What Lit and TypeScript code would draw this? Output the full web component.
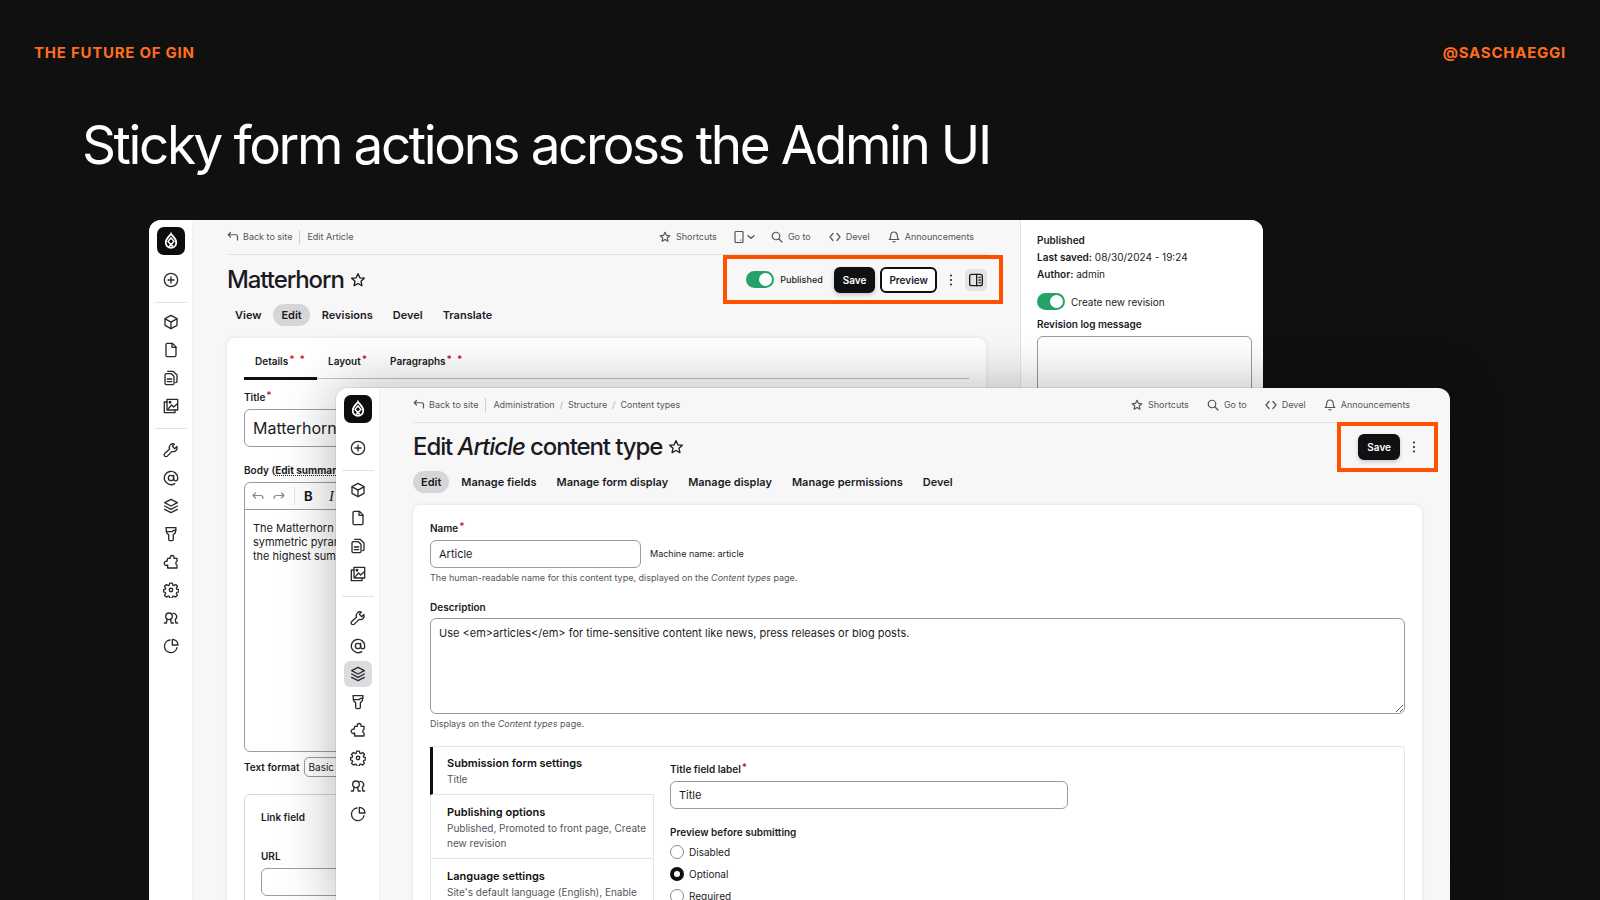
import { LitElement, html, css, svg, nothing } from "lit";
import { customElement, property } from "lit/decorators.js";
import { classMap } from "lit/directives/class-map.js";

const glyphs: Record<string, unknown> = {
  plus: svg`<circle cx="12" cy="12" r="10"/><path d="M12 7.500v9M7.500 12h9"/>`,
  cube: svg`<path d="M12 2 21 7v10l-9 5-9-5V7z"/><path d="m3.300 7.200 8.700 4.900 8.700-4.900M12 12v9.800"/>`,
  file: svg`<path d="M14 2H6.500a2 2 0 0 0-2 2v16a2 2 0 0 0 2 2h11a2 2 0 0 0 2-2V7.500z"/><path d="M13.500 2v6h6"/>`,
  files: svg`<path d="M12.500 5.500H5a2 2 0 0 0-2 2V20a2 2 0 0 0 2 2h9.500a2 2 0 0 0 2-2V9.500z"/><path d="M7 2h8l6 5.500V17a2 2 0 0 1-2 2M6.500 13.500h6.500M6.500 17.500h6.500"/>`,
  media: svg`<path d="M6 2h16v16H6z"/><path d="M6 6H2v16h16v-4M7 17l6-6.500 3 3 5.500-5"/><circle cx="10.500" cy="6.500" r="1.200"/>`,
  wrench: svg`<path d="M20.800 6.800 17.500 10 14 6.500 17.200 3.200a5.600 5.600 0 0 0-7.400 7.200L2.600 17.400a2.500 2.500 0 0 0 0 3.800 2.700 2.700 0 0 0 3.900 0l7.100-7.100a5.600 5.600 0 0 0 7.200-7.300z"/>`,
  at: svg`<circle cx="12" cy="12" r="4"/><path d="M16 8v5.200a3 3 0 0 0 6 0V12a10 10 0 1 0-4.500 8.400"/>`,
  layers: svg`<path d="m12 2 9.500 5-9.500 5-9.500-5z"/><path d="m2.500 12 9.500 5 9.500-5M2.500 17l9.500 5 9.500-5"/>`,
  brush: svg`<path d="M4.500 2.500h15l-1 7.500L15.500 13v7a2 2 0 0 1-2 2h-3a2 2 0 0 1-2-2v-7l-3-3z"/><path d="M5 8.500h9l1.500-2h4"/>`,
  puzzle: svg`<path d="M7 6.500h4a3 3 0 1 1 5.500 0H21V11a3 3 0 0 0 0 5.500V21H7v-4.500a3.200 3.200 0 1 1-1-5.500z"/>`,
  gear: svg`<circle cx="12" cy="12" r="2.600"/><path d="M10 1.800h4l.7 3 1.600.7 2.700-1.700 2.700 2.700-1.700 2.800.7 1.600 3 .7v3.200l-3 .8-.7 1.600 1.700 2.700-2.800 2.800-2.700-1.700-1.600.7-.7 2.600h-3.800l-.7-2.600-1.600-.7-2.700 1.700-2.800-2.800 1.700-2.700-.7-1.600-2.600-.8v-3.200l2.600-.7.700-1.600-1.700-2.800 2.700-2.700 2.800 1.700 1.600-.7z"/>`,
  people: svg`<circle cx="9" cy="9.500" r="5"/><path d="M2 19.500h3l1.200-5.600M15.500 19.500h-3l-1.200-5.600M15 5a5 5 0 0 1 3.500 9l.8 5.500H22"/>`,
  pie: svg`<path d="M10.500 3a9.500 9.500 0 1 0 10.500 11.500"/><path d="M14 2v8.500h8.500A9 9 0 0 0 14 2z"/>`,
  star: svg`<path d="m12 2.500 2.800 6.200 6.700.7-5 4.500 1.400 6.700-5.900-3.400-5.900 3.400 1.400-6.700-5-4.500 6.700-.7z"/>`,
  phone: svg`<rect x="4" y="1" width="16" height="22" rx="2"/><path d="M15 18h1"/>`,
  chevron: svg`<path d="m3 8 9 8 9-8"/>`,
  search: svg`<circle cx="10" cy="10" r="7.500"/><path d="m15.500 15.500 6.500 6.500"/>`,
  code: svg`<path d="M8 5 2 12l6 7M16 5l6 7-6 7"/>`,
  bell: svg`<path d="M12 2a6.500 6.500 0 0 0-6.500 6.500c0 6-3 8.500-3 8.500h19s-3-2.500-3-8.500A6.500 6.500 0 0 0 12 2zM9.500 21.500h5"/>`,
  back: svg`<path d="M7 3 2.500 7.500 7 12M2.500 7.500H18a3 3 0 0 1 3 3V18"/>`,
  undo: svg`<path d="M7 6 2 11l5 5M2 11h15a5 5 0 0 1 5 5v1"/>`,
  redo: svg`<path d="m17 6 5 5-5 5M22 11H7a5 5 0 0 0-5 5v1"/>`,
  panel: svg`<rect x="2.500" y="3.500" width="19" height="17" rx="3"/><path d="M13 3.500v17M16.500 8h2M16.500 12h2M16.500 16h2"/>`,
};

const icon = (name: string, size = "") =>
  html`<svg class="icon ${size}" viewBox="0 0 24 24" aria-hidden="true">${glyphs[name]}</svg>`;

const dots = html`<svg class="icon dots" viewBox="0 0 24 24" aria-hidden="true">
  <circle cx="12" cy="3" r="2" /><circle cx="12" cy="12" r="2" /><circle cx="12" cy="21" r="2" />
</svg>`;

const shared = css`
  :host {
    --ink: #1b1b1f;
    --muted: #55565b;
    --line: #e4e4e6;
    --field: #9b9ba0;
    --accent: #ff5000;
    --green: #26a269;
    font-family: Inter, "Liberation Sans", sans-serif;
    font-size: 10px;
    line-height: 16px;
    color: var(--ink);
  }
  * { box-sizing: border-box; }
  a { color: inherit; text-decoration: none; }
  button, input, textarea, select { font: inherit; color: inherit; margin: 0; }
  .icon {
    display: block;
    width: 16px;
    height: 16px;
    flex: none;
    fill: none;
    stroke: currentColor;
    stroke-width: 2;
    stroke-linejoin: round;
    stroke-linecap: round;
  }
  .icon.small { width: 12px; height: 12px; stroke-width: 2.400; }
  .icon.tiny { width: 8px; height: 8px; stroke-width: 4; }
  .icon.dots { width: 12px; height: 12px; fill: currentColor; stroke: none; }
  .frame {
    display: flex;
    height: 100%;
    overflow: hidden;
    border-radius: 12px;
    background: #f7f7f8;
  }
  .main { flex: 1; min-width: 0; padding: 0 34px; }
  .topbar {
    display: flex;
    justify-content: space-between;
    height: 35px;
    padding-right: 12px;
    border-bottom: 1px solid var(--line);
    font-size: 9px;
    color: var(--muted);
  }
  .crumbs, .tools, .tools a, .tools button, .crumbs a { display: flex; align-items: center; }
  .crumbs a { gap: 4px; }
  .sep { width: 1px; height: 14px; margin: 0 7px; background: #cfcfd2; }
  .slash { margin: 0 5px; color: #b0b0b4; }
  .tools { gap: 18px; }
  .tools a, .tools button { gap: 5px; padding: 0; border: 0; background: none; }
  .tools button { gap: 2px; margin: 0 -2px; }
  .heading { display: flex; align-items: center; justify-content: space-between; height: 49px; }
  .title { display: flex; align-items: center; gap: 6px; }
  h2 { margin: 0; font-size: 24px; line-height: 32px; font-weight: 500; letter-spacing: -0.045em; }
  .tabs { display: flex; gap: 4px; font-size: 11px; font-weight: 600; line-height: 22px; }
  .tabs a { padding: 0 8px; border-radius: 11px; }
  .tabs .current { background: #d6d6d8; }
  .card {
    min-height: 100vh;
    margin-top: 12px;
    padding: 0 17px;
    border-radius: 8px 8px 0 0;
    background: #fff;
    box-shadow: 0 0 4px rgba(0, 0, 0, 0.1);
  }
  .actions { position: relative; display: flex; align-items: center; gap: 5px; }
  .actions::after {
    content: "";
    position: absolute;
    border: 4px solid var(--accent);
    pointer-events: none;
  }
  .btn {
    height: 26px;
    padding: 0 7px;
    border: 2px solid #101012;
    border-radius: 6px;
    background: #fff;
    font-weight: 600;
    line-height: 20px;
  }
  .btn.primary { background: #101012; color: #fff; box-shadow: 0 2px 4px rgba(0, 0, 0, 0.2); }
  .ghost { display: flex; align-items: center; justify-content: center; width: 18px; height: 22px; padding: 0; border: 0; border-radius: 5px; background: none; }
  .switch { display: flex; align-items: center; gap: 6px; }
  .switch input {
    appearance: none;
    width: 28px;
    height: 17px;
    padding: 2px;
    border-radius: 9px;
    background: var(--green);
  }
  .switch input::before {
    content: "";
    display: block;
    width: 13px;
    height: 13px;
    margin-left: 11px;
    border-radius: 50%;
    background: #fff;
  }
  .label { display: block; font-weight: 600; }
  .req { margin-left: 1px; color: #d2122e; font-weight: 600; line-height: 0; vertical-align: 2px; }
  .field {
    display: block;
    width: 100%;
    height: 28px;
    padding: 0 8px;
    border: 1px solid var(--field);
    border-radius: 6px;
    background: #fff;
    font-size: 11px;
    outline: none;
  }
  textarea.field { padding: 6px 8px; line-height: 16px; }
`;

@customElement("admin-rail")
export class AdminRail extends LitElement {
  @property() current = "";

  static styles = [
    shared,
    css`
      :host { display: block; width: 44px; flex: none; background: #fff; border-right: 1px solid #f1f1f2; }
      nav { display: flex; flex-direction: column; align-items: center; padding-top: 7px; }
      .logo {
        display: flex;
        align-items: center;
        justify-content: center;
        width: 28px;
        height: 28px;
        margin-bottom: 11px;
        border-radius: 7px;
        background: #0d0d0e;
        color: #fff;
      }
      .logo svg { display: block; width: 18px; height: 18px; }
      .item { display: flex; align-items: center; justify-content: center; width: 28px; height: 28px; border-radius: 6px; color: #2a2a2e; }
      .item.current { height: 26px; margin: 1px 0; background: #dcdcde; }
      hr { width: 32px; height: 1px; margin: 8px 0 5px; border: 0; background: var(--line); }
      .item + hr ~ hr { margin-bottom: 7px; }
    `,
  ];

  private item(name: string) {
    const active = name === this.current;
    return html`<a href="#${name}" aria-label=${name} class=${classMap({ item: true, current: active })}>${icon(name)}</a>`;
  }

  render() {
    return html`<nav aria-label="Administration">
      <a class="logo" href="#home" aria-label="Home">
        <svg viewBox="0 0 24 24" aria-hidden="true" fill="none" stroke="currentColor">
          <path d="M12 2.500c1.200 2.600 7 5.800 7 11.700a7 7 0 0 1-14 0c0-5.900 5.800-9.100 7-11.700z" stroke-width="2.400" />
          <path d="m7.500 12 7 7.500M16.500 12l-7 7.500M8 12.500 12 8l4 4.500" stroke-width="2" />
        </svg>
      </a>
      ${this.item("plus")}
      <hr />
      ${["cube", "file", "files", "media"].map((n) => this.item(n))}
      <hr />
      ${["wrench", "at", "layers", "brush", "puzzle", "gear", "people", "pie"].map((n) => this.item(n))}
    </nav>`;
  }
}

const tools = (preview = false) => html`<div class="tools">
  <a href="#shortcuts">${icon("star", "small")}Shortcuts</a>
  ${preview
    ? html`<button type="button" aria-label="Preview size">${icon("phone", "small")}${icon("chevron", "tiny")}</button>`
    : nothing}
  <a href="#goto">${icon("search", "small")}Go to</a>
  <a href="#devel">${icon("code", "small")}Devel</a>
  <a href="#announcements">${icon("bell", "small")}Announcements</a>
</div>`;

const tabs = (names: string[], current: string) => html`<nav class="tabs" aria-label="Tabs">
  ${names.map((n) => html`<a href="#${n}" class=${classMap({ current: n === current })}>${n}</a>`)}
</nav>`;

@customElement("article-window")
export class ArticleWindow extends LitElement {
  static styles = [
    shared,
    css`
      :host { display: block; }
      .heading .actions { margin-right: -1px; }
      .actions::after { inset: -12px -16px -11px -23px; }
      .actions .switch { margin-right: 6px; font-size: 9px; font-weight: 500; }
      .panel { width: 22px; background: #e4e4e6; }
      .sections { display: flex; height: 41px; border-bottom: 1px solid #c2c2c5; font-weight: 600; }
      .sections a { height: 42px; padding: 15px 12px 0 11px; border-bottom: 3px solid transparent; }
      .sections .current { border-color: #101012; }
      .sections .req + .req { margin-left: 5px; }
      .big { height: 38px; margin-top: 4px; font-size: 16px; }
      .block { margin-top: 10px; }
      .body { margin-top: 15px; }
      .editor { height: 270px; margin-top: 4px; border: 1px solid var(--field); border-radius: 6px; }
      .bar { display: flex; align-items: center; gap: 9px; height: 27px; padding-left: 7px; border-bottom: 1px solid var(--field); }
      .bar button { display: flex; align-items: center; padding: 0; border: 0; background: none; font-size: 13px; }
      .bar .off { color: #88888c; }
      .bar .rule { width: 1px; height: 18px; background: var(--line); }
      .bar .bold { font-weight: 700; width: 16px; }
      .bar .italic { font-family: "Liberation Serif", serif; font-size: 15px; font-style: italic; }
      .copy { max-width: 280px; margin: 0; padding: 11px 8px; font-size: 11px; line-height: 14px; }
      .summary { text-decoration: underline dotted; font-weight: 700; }
      .format { display: flex; align-items: center; gap: 4px; margin-top: 5px; }
      .format select { width: 140px; height: 20px; padding: 0 4px; border: 1px solid var(--field); border-radius: 5px; background: #fff; appearance: none; }
      fieldset { min-height: 160px; margin: 17px 0 0; padding: 14px 16px; border: 1px solid #d4d4d6; border-radius: 6px; }
      .group { margin: 0 0 23px; font-weight: 600; }
      fieldset .field { margin-top: 4px; }
      aside { width: 243px; flex: none; padding: 12px 11px 0 16px; border-left: 1px solid var(--line); background: #fff; }
      aside p { margin: 0; line-height: 17px; }
      aside b { font-weight: 600; }
      aside .switch { margin: 10px 0 6px; }
      aside textarea.field { height: 90px; margin-top: 4px; }
    `,
  ];

  render() {
    const star = html`<span class="req">*</span>`;
    return html`<section class="frame">
      <admin-rail></admin-rail>
      <div class="main">
        <div class="topbar">
          <div class="crumbs">
            <a href="#back">${icon("back", "small")}Back to site</a><span class="sep"></span><a href="#edit">Edit Article</a>
          </div>
          ${tools(true)}
        </div>
        <div class="heading">
          <div class="title"><h2>Matterhorn</h2>${icon("star")}</div>
          <div class="actions">
            <label class="switch"><input type="checkbox" role="switch" checked />Published</label>
            <button class="btn primary" type="button">Save</button>
            <button class="btn" type="button">Preview</button>
            <button class="ghost" type="button" aria-label="More">${dots}</button>
            <button class="ghost panel" type="button" aria-label="Toggle panel">${icon("panel")}</button>
          </div>
        </div>
        ${tabs(["View", "Edit", "Revisions", "Devel", "Translate"], "Edit")}
        <div class="card">
          <nav class="sections" aria-label="Sections">
            <a class="current" href="#details">Details${star}${star}</a>
            <a href="#layout">Layout${star}</a>
            <a href="#paragraphs">Paragraphs${star}${star}</a>
          </nav>
          <div class="block">
            <label class="label" for="node-title">Title${star}</label>
            <input class="field big" id="node-title" .value=${"Matterhorn"} />
          </div>
          <div class="block body">
            <div class="label">Body (<a class="summary" href="#summary">Edit summary</a>)</div>
            <div class="editor">
              <div class="bar">
                <button class="off" type="button" aria-label="Undo">${icon("undo", "small")}</button>
                <button class="off" type="button" aria-label="Redo">${icon("redo", "small")}</button>
                <span class="rule"></span>
                <button class="bold" type="button">B</button>
                <button class="italic" type="button">I</button>
              </div>
              <p class="copy">The Matterhorn<br />symmetric pyramid<br />the highest summits</p>
            </div>
          </div>
          <div class="format">
            <label class="label" for="format">Text format</label>
            <select id="format"><option>Basic HTML</option></select>
          </div>
          <fieldset>
            <p class="group">Link field</p>
            <label class="label" for="url">URL</label>
            <input class="field" id="url" />
          </fieldset>
        </div>
      </div>
      <aside>
        <p><b>Published</b></p>
        <p><b>Last saved:</b> 08/30/2024 - 19:24</p>
        <p><b>Author:</b> admin</p>
        <label class="switch"><input type="checkbox" role="switch" checked />Create new revision</label>
        <label class="label" for="log">Revision log message</label>
        <textarea class="field" id="log"></textarea>
      </aside>
    </section>`;
  }
}

@customElement("type-window")
export class TypeWindow extends LitElement {
  static styles = [
    shared,
    css`
      :host { display: block; }
      .main { padding: 0 28px 0 33px; }
      .heading { height: 48px; }
      .heading .actions { padding-right: 7px; margin-right: -8px; }
      .actions::after { inset: -12px -8px -12px -21px; }
      .card { padding-top: 15px; }
      .row { display: flex; align-items: center; gap: 9px; margin-top: 4px; }
      .row .field { width: 211px; }
      .hint { margin: 2px 0 13px; font-size: 9px; color: var(--muted); }
      .note { font-size: 9px; }
      textarea.field { height: 96px; margin-top: 3px; }
      .group { display: flex; min-height: 300px; margin-top: 14px; border: 1px solid var(--line); border-radius: 4px; }
      .menu { width: 223px; flex: none; border-right: 1px solid var(--line); }
      .menu a { display: block; padding: 9px 2px 7px 16px; border-bottom: 1px solid var(--line); color: var(--muted); line-height: 15px; }
      .menu a.current { margin: 0 -1px; padding: 8px 8px 7px 14px; border-left: 3px solid #101012; background: #fff; }
      .menu b { display: block; font-size: 11px; line-height: 17px; font-weight: 600; color: #101012; }
      .pane { flex: 1; padding: 14px 16px; }
      .pane .field { max-width: 398px; margin-top: 4px; }
      .choices { margin: 15px 0 0; padding: 0; border: 0; }
      .choices legend { padding: 0; font-weight: 600; }
      .choices label { display: flex; align-items: center; gap: 5px; height: 22px; }
      .choices legend + label { margin-top: 1px; }
      .choices input { appearance: none; width: 14px; height: 14px; border: 1px solid #8a8a8f; border-radius: 50%; }
      .choices input:checked { border: 4px solid #101012; }
    `,
  ];

  render() {
    const star = html`<span class="req">*</span>`;
    return html`<section class="frame">
      <admin-rail current="layers"></admin-rail>
      <div class="main">
        <div class="topbar">
          <div class="crumbs">
            <a href="#back">${icon("back", "small")}Back to site</a><span class="sep"></span><a href="#admin">Administration</a
            ><span class="slash">/</span><a href="#structure">Structure</a><span class="slash">/</span><a href="#types">Content types</a>
          </div>
          ${tools()}
        </div>
        <div class="heading">
          <div class="title"><h2>Edit <em>Article</em> content type</h2>${icon("star")}</div>
          <div class="actions">
            <button class="btn primary" type="button">Save</button>
            <button class="ghost" type="button" aria-label="More">${dots}</button>
          </div>
        </div>
        ${tabs(["Edit", "Manage fields", "Manage form display", "Manage display", "Manage permissions", "Devel"], "Edit")}
        <div class="card">
          <label class="label" for="type-name">Name${star}</label>
          <div class="row">
            <input class="field" id="type-name" .value=${"Article"} /><span class="note">Machine name: article</span>
          </div>
          <p class="hint">The human-readable name for this content type, displayed on the <em>Content types</em> page.</p>
          <label class="label" for="description">Description</label>
          <textarea class="field" id="description" .value=${"Use <em>articles</em> for time-sensitive content like news, press releases or blog posts."}></textarea>
          <p class="hint">Displays on the <em>Content types</em> page.</p>
          <div class="group">
            <nav class="menu" aria-label="Settings">
              <a class="current" href="#submission"><b>Submission form settings</b>Title</a>
              <a href="#publishing"><b>Publishing options</b>Published, Promoted to front page, Create new revision</a>
              <a href="#language"><b>Language settings</b>Site's default language (English), Enable</a>
            </nav>
            <div class="pane">
              <label class="label" for="title-label">Title field label${star}</label>
              <input class="field" id="title-label" .value=${"Title"} />
              <fieldset class="choices">
                <legend>Preview before submitting</legend>
                ${["Disabled", "Optional", "Required"].map(
                  (n) => html`<label><input type="radio" name="preview" .value=${n} ?checked=${n === "Optional"} />${n}</label>`,
                )}
              </fieldset>
            </div>
          </div>
        </div>
      </div>
    </section>`;
  }
}

@customElement("app-root")
export class AppRoot extends LitElement {
  static styles = css`
    :host {
      display: flex;
      flex-direction: column;
      height: 100vh;
      overflow: hidden;
      background: #101010;
      color: #fff;
      font-family: Inter, "Liberation Sans", sans-serif;
    }
    header {
      display: flex;
      justify-content: space-between;
      padding: 43px 34px 0;
      font-size: 15px;
      line-height: 20px;
      font-weight: 700;
      letter-spacing: 0.05em;
      text-transform: uppercase;
      color: #ff6d1f;
    }
    h1 { margin: 48px 82px 40px; font-size: 53px; line-height: 69px; font-weight: 400; letter-spacing: -0.045em; }
    .canvas { position: relative; flex: 1; }
    article-window, type-window { position: absolute; bottom: -12px; border-radius: 12px; }
    article-window { top: 0; left: 149px; right: 337px; }
    type-window { top: 168px; left: 336px; right: 150px; box-shadow: 0 0 1px rgba(0, 0, 0, 0.6), 0 0 56px rgba(0, 0, 0, 0.3); }
  `;

  render() {
    return html`
      <header><span>The future of Gin</span><span>@saschaeggi</span></header>
      <h1>Sticky form actions across the Admin UI</h1>
      <div class="canvas">
        <article-window></article-window>
        <type-window></type-window>
      </div>
    `;
  }
}
